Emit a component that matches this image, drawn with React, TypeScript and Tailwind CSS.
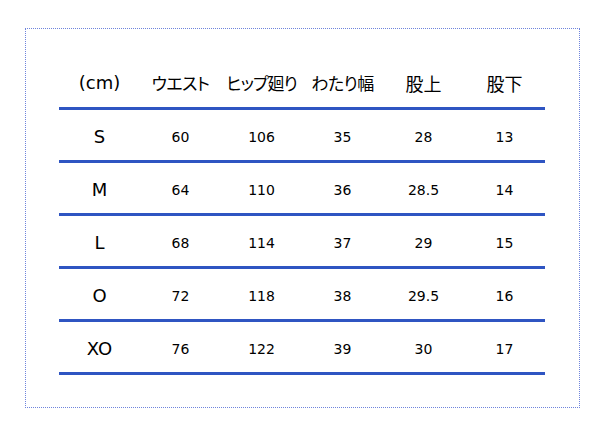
import React from "react";

const headers: [string, string][] = [
  ["(cm)", "text-[18px] [font-family:'DejaVu_Sans',sans-serif]"],
  ["ウエスト", "text-[17px] [font-family:'Noto_Sans_CJK_JP',sans-serif] [font-feature-settings:'palt'] tracking-[-0.5px]"],
  ["ヒップ廻り", "text-[17px] [font-family:'Noto_Sans_CJK_JP',sans-serif] [font-feature-settings:'palt'] tracking-[-1px]"],
  ["わたり幅", "text-[17px] [font-family:'Noto_Sans_CJK_JP',sans-serif] [font-feature-settings:'palt'] tracking-[-0.5px]"],
  ["股上", "text-[18px] [font-family:'Noto_Sans_CJK_JP',sans-serif]"],
  ["股下", "text-[18px] [font-family:'Noto_Sans_CJK_JP',sans-serif]"],
];
const rows = [
  ["S", "60", "106", "35", "28", "13"],
  ["M", "64", "110", "36", "28.5", "14"],
  ["L", "68", "114", "37", "29", "15"],
  ["O", "72", "118", "38", "29.5", "16"],
  ["XO", "76", "122", "39", "30", "17"],
];

export default function App() {
  return (
    <div className="w-[608px] h-[429px] bg-white pt-[28px] pl-[25px]">
      <div className="w-[555px] h-[380px] border border-dotted border-[#6f84dc] pl-[33px] pt-[42px]">
        <div className="w-[486px] text-black [font-family:'DejaVu_Sans','Noto_Sans_CJK_JP',sans-serif]">
          <div className="grid grid-cols-6 h-[39px] border-b-[3px] border-[#2f55c2]">
            {headers.map(([h, cls], i) => (
              <div key={i} className={"text-center leading-[24px] h-[24px] " + cls}>
                {h}
              </div>
            ))}
          </div>
          {rows.map((r, ri) => (
            <div key={ri} className="grid grid-cols-6 h-[53px] pt-[4px] items-center border-b-[3px] border-[#2f55c2]">
              {r.map((c, ci) => (
                <div
                  key={ci}
                  className={
                    ci === 0
                      ? "text-center text-[18px] leading-[24px]"
                      : "text-center text-[14px] leading-[20px]"
                  }
                >
                  {c}
                </div>
              ))}
            </div>
          ))}
        </div>
      </div>
    </div>
  );
}
